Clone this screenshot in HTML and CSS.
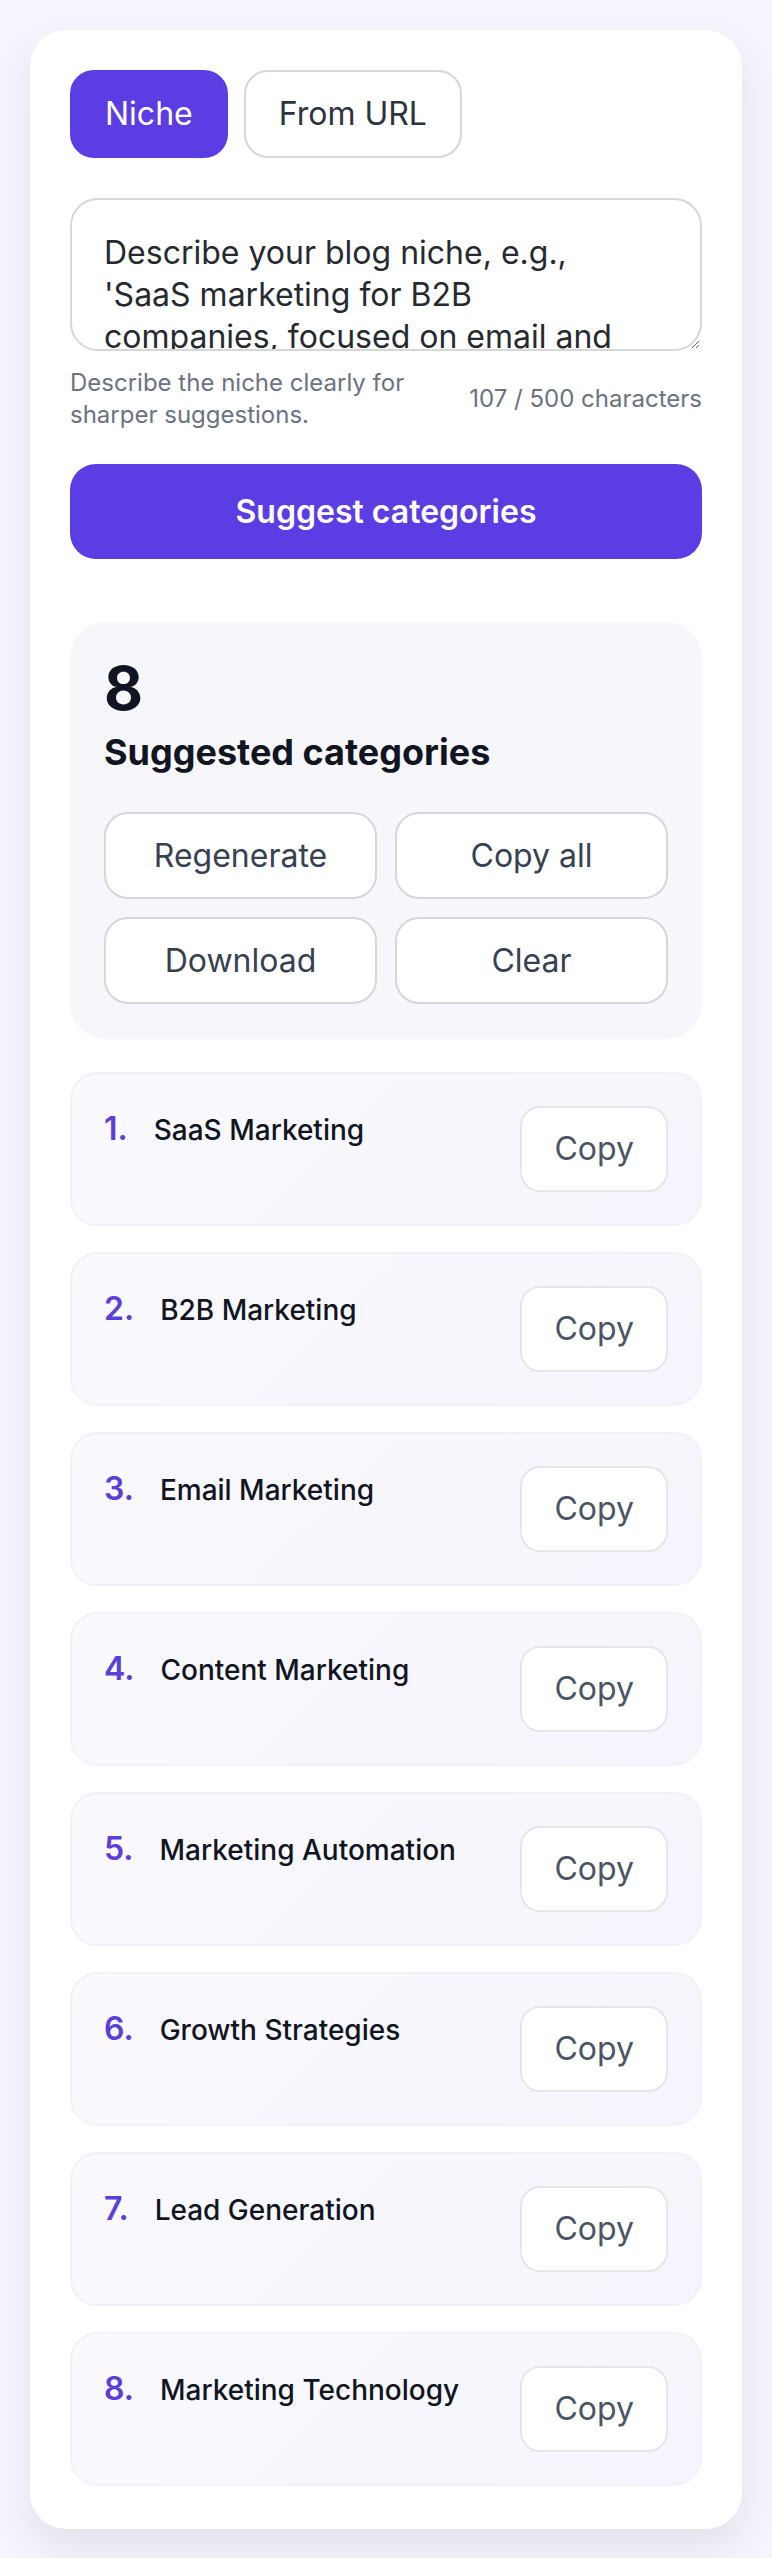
FILE: index.html
```html
<!DOCTYPE html>
<html>
<head>
    <title>Blog Category Generator</title>
    <link rel="stylesheet" href="styles.css">
</head>
<body>
    <div class="card">
        <div class="tabs">
            <button type="button" class="tab active">Niche</button>
            <button type="button" class="tab">From URL</button>
        </div>

        <textarea id="nicheInput" class="niche-input" maxlength="500">Describe your blog niche, e.g., 'SaaS marketing for B2B companies, focused on email and content marketing.'</textarea>
        <div class="helper-row">
            <p class="helper">Describe the niche clearly for sharper suggestions.</p>
            <p class="counter"><span id="charCount">107</span> / 500 characters</p>
        </div>

        <button type="button" class="primary">Suggest categories</button>

        <div class="summary">
            <div class="count">8</div>
            <h2>Suggested categories</h2>
            <div class="actions">
                <button type="button" class="action">Regenerate</button>
                <button type="button" class="action">Copy all</button>
                <button type="button" class="action">Download</button>
                <button type="button" class="action">Clear</button>
            </div>
        </div>

        <ul class="results">
            <li class="result">
                <div class="result-text"><span class="num">1.</span><span class="name">SaaS Marketing</span></div>
                <button type="button" class="copy">Copy</button>
            </li>
            <li class="result">
                <div class="result-text"><span class="num">2.</span><span class="name">B2B Marketing</span></div>
                <button type="button" class="copy">Copy</button>
            </li>
            <li class="result">
                <div class="result-text"><span class="num">3.</span><span class="name">Email Marketing</span></div>
                <button type="button" class="copy">Copy</button>
            </li>
            <li class="result">
                <div class="result-text"><span class="num">4.</span><span class="name">Content Marketing</span></div>
                <button type="button" class="copy">Copy</button>
            </li>
            <li class="result">
                <div class="result-text"><span class="num">5.</span><span class="name">Marketing Automation</span></div>
                <button type="button" class="copy">Copy</button>
            </li>
            <li class="result">
                <div class="result-text"><span class="num">6.</span><span class="name">Growth Strategies</span></div>
                <button type="button" class="copy">Copy</button>
            </li>
            <li class="result">
                <div class="result-text"><span class="num">7.</span><span class="name">Lead Generation</span></div>
                <button type="button" class="copy">Copy</button>
            </li>
            <li class="result">
                <div class="result-text"><span class="num">8.</span><span class="name">Marketing Technology</span></div>
                <button type="button" class="copy">Copy</button>
            </li>
        </ul>
    </div>

    <script>
        var input = document.getElementById("nicheInput");
        input.addEventListener("input", function () {
            document.getElementById("charCount").textContent = input.value.length;
        });
    </script>
</body>
</html>
```

FILE: styles.css
```css
* {
    box-sizing: border-box;
}
body {
    font-family: 'Inter', 'Noto Sans', sans-serif;
    background: #f6f5fd;
    margin: 0;
    padding: 30px;
}
button {
    font-family: inherit;
    cursor: pointer;
}
.card {
    background: white;
    border-radius: 36px;
    padding: 40px 40px 43px;
    box-shadow: 0 18px 40px rgba(30, 30, 60, 0.09);
}
.tabs {
    display: flex;
    gap: 16px;
}
.tab {
    background: white;
    color: #2d3340;
    border: 2px solid #d6d6db;
    border-radius: 24px;
    padding: 22px 33px;
    font-size: 32px;
    line-height: 40px;
}
.tab.active {
    background: #5b3de3;
    border-color: #5b3de3;
    color: white;
}
.niche-input {
    display: block;
    width: 100%;
    height: 153px;
    margin-top: 40px;
    padding: 32px 60px 32px 32px;
    border: 2px solid #d6d6db;
    border-radius: 28px;
    font-family: inherit;
    font-size: 32px;
    line-height: 42px;
    color: #262a30;
    overflow: hidden;
}
.helper-row {
    display: flex;
    align-items: center;
    gap: 16px;
    margin-top: 16px;
    color: #6b7280;
    font-size: 24px;
    line-height: 32px;
}
.helper-row p {
    margin: 0;
}
.helper {
    flex: 1;
}
.counter {
    white-space: nowrap;
}
.primary {
    display: block;
    width: 100%;
    height: 95px;
    margin-top: 33px;
    background: #5b3de3;
    color: white;
    border: none;
    border-radius: 26px;
    font-size: 32px;
    font-weight: 600;
}
.summary {
    margin-top: 63px;
    background: #f6f6fb;
    border-radius: 36px;
    padding: 30px 34px 35px;
}
.count {
    font-size: 60px;
    font-weight: 700;
    line-height: 72px;
    color: #111522;
}
.summary h2 {
    margin: 5px 0 0;
    font-size: 36px;
    line-height: 46px;
    font-weight: 700;
    color: #111522;
}
.actions {
    display: grid;
    grid-template-columns: 1fr 1fr;
    gap: 18px;
    margin-top: 37px;
}
.action {
    height: 87px;
    background: white;
    border: 2px solid #d6d6db;
    border-radius: 24px;
    font-size: 32px;
    color: #374151;
}
.results {
    list-style: none;
    margin: 33px 0 0;
    padding: 0;
    display: flex;
    flex-direction: column;
    gap: 26px;
}
.result {
    display: flex;
    justify-content: space-between;
    align-items: flex-start;
    padding: 32px;
    border: 2px solid #f1f1f7;
    border-radius: 28px;
    background: linear-gradient(135deg, #f9f9fe, #f6f5fd);
}
.result-text {
    display: flex;
    align-items: baseline;
    line-height: 45px;
}
.num {
    font-size: 32px;
    font-weight: 600;
    color: #5b3fd6;
    margin-right: 26px;
}
.name {
    font-size: 28px;
    font-weight: 500;
    color: #111522;
}
.copy {
    background: white;
    border: 2px solid #e6e7eb;
    border-radius: 20px;
    padding: 21px 32px;
    font-size: 32px;
    line-height: 40px;
    color: #4b5563;
}
```
